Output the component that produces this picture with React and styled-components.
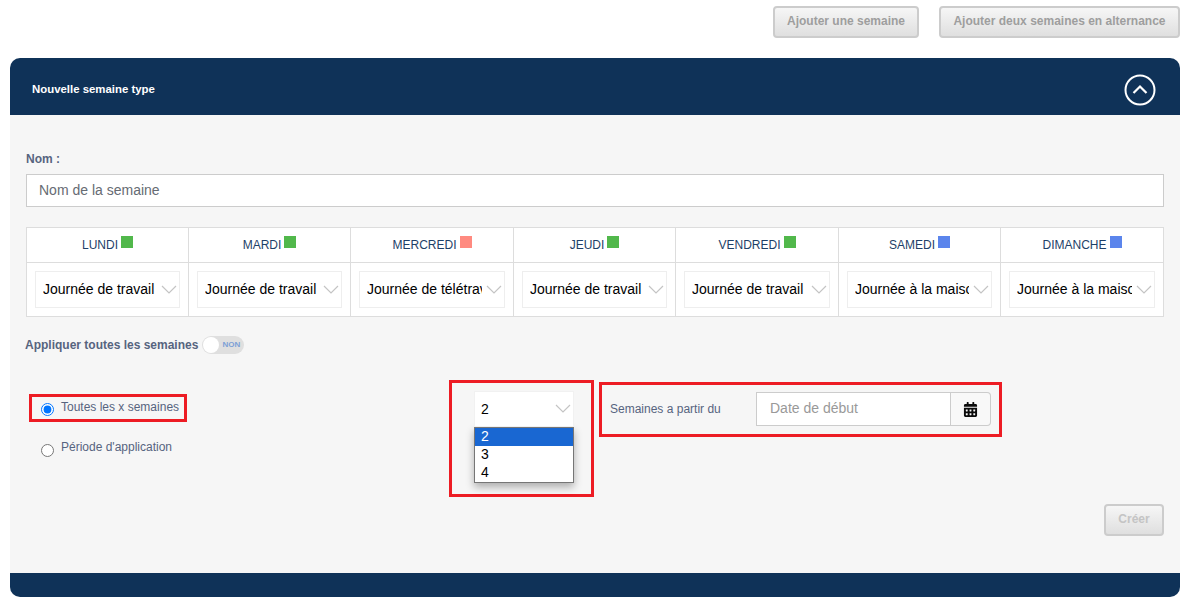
import React from 'react';
import styled, { createGlobalStyle } from 'styled-components';
import { FaCalendarAlt } from 'react-icons/fa';

const GlobalStyle = createGlobalStyle`
  html, body {
    margin: 0;
    padding: 0;
    background: #ffffff;
    font-family: "Liberation Sans", Arial, sans-serif;
  }
  * {
    box-sizing: border-box;
  }
`;

const Page = styled.div`
  width: 1184px;
  height: 600px;
  padding: 0 4px 3px 10px;
  overflow: hidden;
`;
const TopBar = styled.div`
  height: 58px;
  padding-top: 6px;
  display: flex;
  justify-content: flex-end;
  align-items: flex-start;
  gap: 20px;
`;
const GreyButton = styled.button`
  height: 32px;
  width: ${(p) => p.$width}px;
  padding: 0 0 2px;
  border: 2px solid #cccccc;
  border-radius: 4px;
  background: linear-gradient(#f6f6f6, #dfdfdf);
  color: ${(p) => (p.$faded ? '#c4c4c4' : '#9e9e9e')};
  font-family: inherit;
  font-size: 12px;
  font-weight: bold;
`;
const Panel = styled.section`
  width: 1170px;
  height: 539px;
  display: flex;
  flex-direction: column;
`;
const PanelHeader = styled.header`
  height: 57px;
  flex-shrink: 0;
  padding: 4px 24px 0 22px;
  background: #0f3258;
  border-radius: 10px 10px 0 0;
  display: flex;
  align-items: center;
  justify-content: space-between;
  color: #ffffff;
  font-size: 11.4px;
  font-weight: bold;
`;
const CollapseIcon = styled.svg`
  display: block;
  width: 32px;
  height: 32px;
  margin-top: 3px;
`;
const PanelBody = styled.div`
  flex: 1;
  padding: 37px 16px 0;
  background: #f6f6f6;
`;
const PanelFooter = styled.footer`
  height: 24px;
  flex-shrink: 0;
  background: #0f3258;
  border-radius: 0 0 10px 10px;
`;
const FieldLabel = styled.label`
  display: block;
  height: 14px;
  margin-bottom: 8px;
  color: #56647f;
  font-size: 12px;
  line-height: 14px;
  font-weight: bold;
`;
const NameInput = styled.input`
  display: block;
  width: 100%;
  height: 33px;
  padding: 0 12px 2px;
  border: 1px solid #cccccc;
  background: #ffffff;
  font-family: inherit;
  font-size: 14px;
  outline: none;
  &::placeholder {
    color: #666b73;
    opacity: 1;
  }
`;
const WeekTable = styled.table`
  width: 1137px;
  margin-top: 20px;
  table-layout: fixed;
  border-collapse: collapse;
  background: #ffffff;
`;
const DayCell = styled.th`
  width: ${(p) => p.$width}px;
  height: 35px;
  padding: 0 0 2px;
  border: 1px solid #dddddd;
  color: #1e3f68;
  font-size: 12px;
  font-weight: normal;
  text-align: center;
`;
const SelectCell = styled.td`
  height: 54px;
  padding: 0 8px;
  border: 1px solid #dddddd;
`;
const DaySwatch = styled.span`
  display: inline-block;
  width: 12px;
  height: 12px;
  margin-left: 3px;
  vertical-align: 1px;
  background: ${(p) => p.$color};
`;
const SelectWrap = styled.div`
  position: relative;
  width: ${(p) => p.$width || '100%'};
  height: ${(p) => p.$height || 37}px;
  background: #ffffff;
  border: 1px solid ${(p) => p.$border || '#eeeeee'};
`;
const NativeSelect = styled.select`
  display: block;
  width: 100%;
  height: 100%;
  padding: 0 22px 1px ${(p) => (p.$compact ? 6 : 7)}px;
  border: none;
  background: transparent;
  appearance: none;
  color: #000000;
  font-family: inherit;
  font-size: 14px;
  outline: none;
`;
const Chevron = styled.svg`
  position: absolute;
  right: 2px;
  top: 50%;
  width: 16px;
  height: 9px;
  margin-top: -5px;
  pointer-events: none;
`;
const ApplyRow = styled.div`
  display: flex;
  align-items: center;
  gap: 4px;
  height: 18px;
  margin: 19px 0 0 -1px;
  color: #56647f;
  font-size: 12px;
  font-weight: bold;
`;
const Toggle = styled.span`
  position: relative;
  width: 42px;
  height: 18px;
  border-radius: 9px;
  background: #dfdfdf;
  color: #7d9fd6;
  font-size: 8px;
  line-height: 18px;
  padding-left: 20px;
`;
const ToggleKnob = styled.span`
  position: absolute;
  left: 1px;
  top: 1px;
  width: 16px;
  height: 16px;
  border-radius: 50%;
  background: #ffffff;
`;
const OptionsRow = styled.div`
  display: flex;
  align-items: flex-start;
  margin-top: 26px;
`;
const RadioColumn = styled.div`
  width: 423px;
  padding: 14px 0 0 3px;
`;
const RedBox = styled.div`
  border: 3px solid #ed1c24;
`;
const RadioRow = styled.label`
  display: flex;
  align-items: center;
  width: 158px;
  height: 28px;
  margin-top: ${(p) => p.$top || 0}px;
  padding-left: 9px;
  border: 3px solid ${(p) => (p.$marked ? '#ed1c24' : 'transparent')};
  color: #56647f;
  font-size: 12px;
  white-space: nowrap;
`;
const Radio = styled.input`
  width: 13px;
  height: 13px;
  margin: 2px 7px 0 0;
  flex-shrink: 0;
`;
const RadioText = styled.span`
  margin-top: ${(p) => p.$shift || 0}px;
`;
const WeekPicker = styled(RedBox)`
  width: 145px;
  height: 117px;
  padding: 8px 0 0 22px;
`;
const OptionList = styled.ul`
  width: 100px;
  margin: 0;
  padding: 0;
  list-style: none;
  background: #ffffff;
  border: 1px solid #767676;
  box-shadow: 0 4px 8px rgba(0, 0, 0, 0.3);
`;
const OptionItem = styled.li`
  height: 18px;
  padding-left: 6px;
  color: ${(p) => (p.$selected ? '#ffffff' : '#000000')};
  background: ${(p) => (p.$selected ? '#1967d2' : 'transparent')};
  font-size: 14px;
  line-height: 17px;
`;
const DateBox = styled(RedBox)`
  width: 403px;
  height: 55px;
  margin: 2px 0 0 5px;
  padding: 7px 0 0 8px;
  display: flex;
  align-items: flex-start;
`;
const DateLabel = styled.span`
  width: 146px;
  height: 34px;
  color: #56647f;
  font-size: 12px;
  line-height: 34px;
`;
const DateInput = styled.input`
  width: 195px;
  height: 34px;
  padding: 0 13px 2px;
  border: 1px solid #cccccc;
  background: #ffffff;
  font-family: inherit;
  font-size: 14px;
  outline: none;
  &::placeholder {
    color: #999999;
    opacity: 1;
  }
`;
const CalendarButton = styled.button`
  width: 40px;
  height: 34px;
  padding: 0;
  border: 1px solid #cccccc;
  border-left: none;
  border-radius: 0 4px 4px 0;
  background: #f8f8f8;
  color: #0a0a0a;
  display: flex;
  align-items: center;
  justify-content: center;
`;
const FormActions = styled.div`
  display: flex;
  justify-content: flex-end;
  margin-top: 7px;
`;

const DAYS = [
  { name: 'LUNDI', color: '#51b84b', type: 'Journée de travail', width: 162 },
  { name: 'MARDI', color: '#51b84b', type: 'Journée de travail', width: 162 },
  { name: 'MERCREDI', color: '#ff8a80', type: 'Journée de télétravail', width: 163 },
  { name: 'JEUDI', color: '#51b84b', type: 'Journée de travail', width: 162 },
  { name: 'VENDREDI', color: '#51b84b', type: 'Journée de travail', width: 163 },
  { name: 'SAMEDI', color: '#5b85ec', type: 'Journée à la maison', width: 162 },
  { name: 'DIMANCHE', color: '#5b85ec', type: 'Journée à la maison', width: 163 },
];

const ChevronDown = () => (
  <Chevron viewBox="0 0 16 9" fill="none" stroke="#c4c4c4" strokeWidth="1.2">
    <path d="M1 1l7 7 7-7" />
  </Chevron>
);

const App = () => {
  return (
    <Page>
      <GlobalStyle />
      <TopBar>
        <GreyButton $width={146}>Ajouter une semaine</GreyButton>
        <GreyButton $width={241}>Ajouter deux semaines en alternance</GreyButton>
      </TopBar>
      <Panel>
        <PanelHeader>
          Nouvelle semaine type
          <CollapseIcon viewBox="0 0 32 32" fill="none" stroke="#ffffff" strokeWidth="2">
            <circle cx="16" cy="16" r="14.5" />
            <path d="M9.5 19l6.5-6.5 6.5 6.5" strokeWidth="2.2" />
          </CollapseIcon>
        </PanelHeader>
        <PanelBody>
          <FieldLabel>Nom :</FieldLabel>
          <NameInput placeholder="Nom de la semaine" />
          <WeekTable>
            <thead>
              <tr>
                {DAYS.map((day) => (
                  <DayCell key={day.name} $width={day.width}>
                    {day.name}
                    <DaySwatch $color={day.color} />
                  </DayCell>
                ))}
              </tr>
            </thead>
            <tbody>
              <tr>
                {DAYS.map((day) => (
                  <SelectCell key={day.name}>
                    <SelectWrap>
                      <NativeSelect defaultValue={day.type}>
                        <option>{day.type}</option>
                      </NativeSelect>
                      <ChevronDown />
                    </SelectWrap>
                  </SelectCell>
                ))}
              </tr>
            </tbody>
          </WeekTable>
          <ApplyRow>
            Appliquer toutes les semaines
            <Toggle>
              <ToggleKnob />
              NON
            </Toggle>
          </ApplyRow>
          <OptionsRow>
            <RadioColumn>
              <RadioRow $marked>
                <Radio type="radio" name="period" defaultChecked />
                <RadioText $shift={-2}>Toutes les x semaines</RadioText>
              </RadioRow>
              <RadioRow $top={13}>
                <Radio type="radio" name="period" />
                <RadioText $shift={-4}>Période d'application</RadioText>
              </RadioRow>
            </RadioColumn>
            <WeekPicker>
              <SelectWrap $width="100px" $height={36} $border="#f1f1f1">
                <NativeSelect $compact defaultValue="2">
                  <option>2</option>
                  <option>3</option>
                  <option>4</option>
                </NativeSelect>
                <ChevronDown />
              </SelectWrap>
              <OptionList>
                <OptionItem $selected>2</OptionItem>
                <OptionItem>3</OptionItem>
                <OptionItem>4</OptionItem>
              </OptionList>
            </WeekPicker>
            <DateBox>
              <DateLabel>Semaines a partir du</DateLabel>
              <DateInput placeholder="Date de début" />
              <CalendarButton type="button">
                <FaCalendarAlt size={15} />
              </CalendarButton>
            </DateBox>
          </OptionsRow>
          <FormActions>
            <GreyButton $width={60} $faded>Créer</GreyButton>
          </FormActions>
        </PanelBody>
        <PanelFooter />
      </Panel>
    </Page>
  );
};

export default App;
